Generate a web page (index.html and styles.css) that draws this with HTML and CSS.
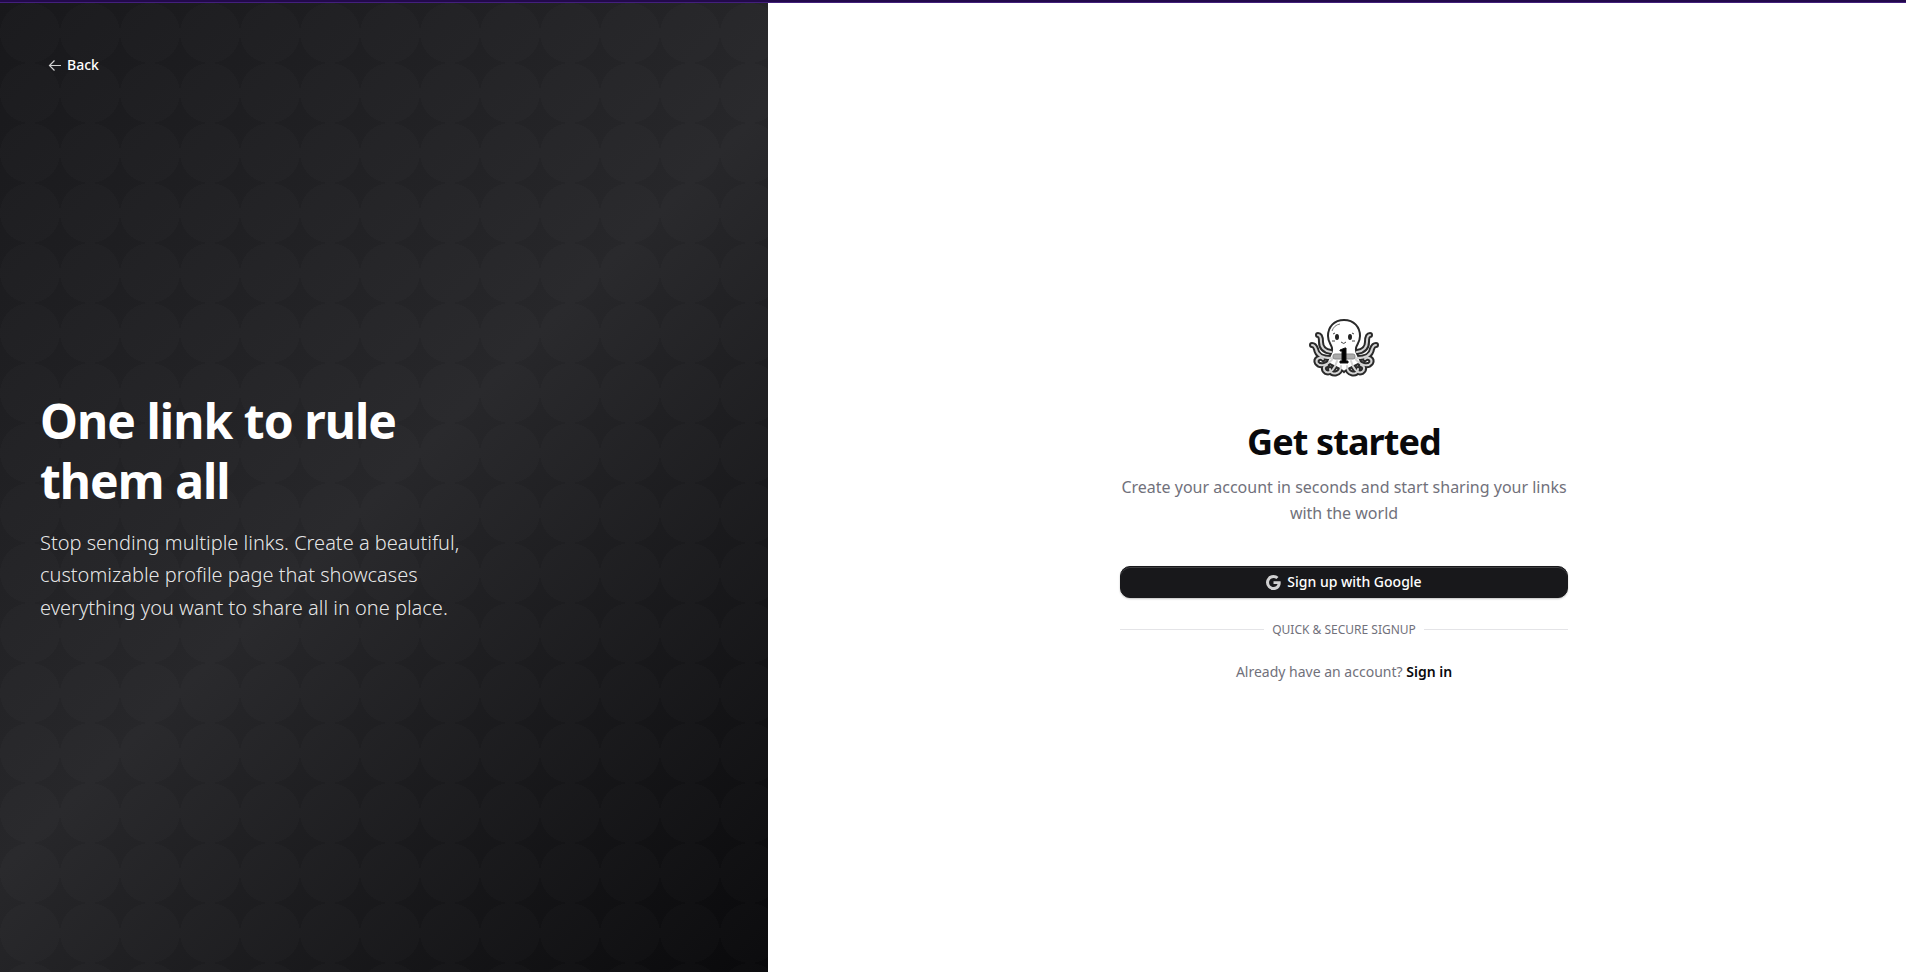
FILE: index.html
```html
<!DOCTYPE html>
<html lang="en">
<head>
<meta charset="utf-8">
<title>Get started</title>
<link rel="stylesheet" href="styles.css">
</head>
<body>
<div class="accent-bar"></div>
<div class="layout">
  <aside class="promo">
    <a class="back" href="#">
      <svg class="back-icon" viewBox="0 0 15 15" aria-hidden="true"><path d="M13 7.500H2M6.500 2.500L1.500 7.500l5 5" fill="none" stroke="currentColor" stroke-width="1.200"/></svg>
      Back
    </a>
    <div class="promo-copy">
      <h2 class="promo-title">One link to rule them all</h2>
      <p class="promo-text">Stop sending multiple links. Create a beautiful, customizable profile page that showcases everything you want to share all in one place.</p>
    </div>
  </aside>
  <main class="signup">
    <div class="card">
      <svg class="logo" viewBox="0 0 96 96" role="img" aria-label="Octopus logo">
        <g id="arms" fill="none" stroke-linecap="round" stroke-linejoin="round">
          <g stroke="#2a2a2a" stroke-width="6">
            <path id="a1" d="M35 52C28 51 25 47 25 42C25 37 24 35 22 35"/>
            <path id="a2" d="M35 58C25 58 21 55 20 49C19 46 18 45 16 45"/>
            <path id="a3" d="M38 57C32 66 24 67 21 63C19 59 24 56 27 59"/>
            <path id="a4" d="M41 61C39 68 35 74 30 72C27 70 27 66 31 65"/>
            <path id="a5" d="M45 66C45 75 34 76 34 69"/>
          </g>
        </g>
        <use href="#arms" transform="translate(96 0) scale(-1 1)"/>
        <path d="M48 20C38 20 32 27 32 36C32 42 35 44 36 48C37 54 32 57 31 62C36 67 42 66 48 72C54 66 60 67 65 62C64 57 59 54 60 48C61 44 64 42 64 36C64 27 58 20 48 20Z" fill="#fff" stroke="#2a2a2a" stroke-width="2"/>
        <g id="inner" fill="none" stroke="#d4d4d4" stroke-width="2" stroke-linecap="round">
          <path d="M35 52C28 51 25 47 25 42C25 37 24 35 22 35"/>
          <path d="M35 58C25 58 21 55 20 49C19 46 18 45 16 45"/>
          <path d="M38 57C32 66 24 67 21 63C19 59 24 56 27 59"/>
          <path d="M41 61C39 68 35 74 30 72C27 70 27 66 31 65"/>
          <path d="M45 66C45 75 34 76 34 69"/>
        </g>
        <use href="#inner" transform="translate(96 0) scale(-1 1)"/>
        <path d="M36 31Q38 25 44 24" fill="none" stroke="#777" stroke-width="1"/>
        <ellipse cx="41" cy="37" rx="2" ry="3" fill="#222"/><ellipse cx="54" cy="37" rx="2" ry="3" fill="#222"/>
        <path d="M37 34L39 33M58 34L56 33M36 41H39M56 41H59M45 42Q48 45 50 42" fill="none" stroke="#444" stroke-width="1"/>
        <rect x="37" y="54" width="22" height="5" rx="2" fill="#aaa" stroke="#888"/>
        <path d="M44 50L49 48H50V61H52V63H44V61H46V51H44Z" fill="#000" stroke="#111"/>
      </svg>
      <h1 class="title">Get started</h1>
      <p class="subtitle">Create your account in seconds and start sharing your links with the world</p>
      <button class="google" type="button">
        <svg class="google-icon" viewBox="2 2 20 20" aria-hidden="true"><path fill="currentColor" d="M3.064 7.510A9.996 9.996 0 0 1 12 2c2.695 0 4.959.991 6.690 2.605l-2.867 2.868C14.786 6.482 13.468 5.977 12 5.977c-2.605 0-4.810 1.760-5.595 4.123-.2.6-.314 1.240-.314 1.900 0 .66.114 1.300.314 1.900.786 2.364 2.990 4.123 5.595 4.123 1.345 0 2.490-.355 3.386-.955a4.600 4.600 0 0 0 1.996-3.018H12v-3.868h9.418c.118.654.182 1.336.182 2.045 0 3.046-1.090 5.610-2.982 7.350C16.964 21.105 14.700 22 12 22A9.996 9.996 0 0 1 2 12c0-1.614.386-3.140 1.064-4.490z"/></svg>
        Sign up with Google
      </button>
      <div class="divider"><span>Quick &amp; secure signup</span></div>
      <p class="signin">Already have an account? <a href="#">Sign in</a></p>
    </div>
  </main>
</div>
</body>
</html>
```
FILE: styles.css
```css
*, *::before, *::after { box-sizing: border-box; }
body {
  margin: 0;
  min-height: 100vh;
  display: flex;
  flex-direction: column;
  background: #fff;
  color: #09090b;
  font-family: "Noto Sans", sans-serif;
  font-size: 14px;
  line-height: 20px;
}
h1, h2, p { margin: 0; }
a { color: inherit; text-decoration: none; }
.accent-bar { height: 3px; background: #22094b; border-bottom: 1px solid #43207c; }
.layout { flex: 1; display: flex; }

.promo {
  flex: 0 1 768px;
  display: flex;
  flex-direction: column;
  align-items: flex-start;
  padding: 46px 40px 38px;
  color: #fff;
  background:
    radial-gradient(circle at center, rgba(255, 255, 255, 0.01) 30px, transparent 30px) 0 0 / 60px 60px,
    linear-gradient(135deg, #18181b, #27272a 50%, #09090b);
}
.back {
  display: flex;
  align-items: center;
  gap: 4px;
  height: 32px;
  padding: 0 8px;
  font-weight: 500;
}
.back-icon { width: 15px; height: 15px; opacity: 0.8; }
.promo-copy { flex: 1; display: flex; flex-direction: column; justify-content: center; gap: 16px; max-width: 448px; }
.promo-title { font-size: 48px; line-height: 60px; font-weight: 700; letter-spacing: -0.02em; }
.promo-text { font-size: 20px; line-height: 1.625; font-weight: 300; color: rgba(255, 255, 255, 0.9); }

.signup { flex: 1; display: flex; align-items: center; justify-content: center; padding: 39px 32px 32px 46px; }
.card { width: 100%; max-width: 448px; display: flex; flex-direction: column; text-align: center; }
.logo { width: 96px; height: 96px; align-self: center; margin-bottom: 26px; }
.title { font-size: 36px; line-height: 40px; font-weight: 700; letter-spacing: -0.025em; margin-bottom: 12px; }
.subtitle { font-size: 16px; line-height: 26px; color: #71717b; margin-bottom: 40px; }
.google {
  display: flex;
  align-items: center;
  justify-content: center;
  gap: 6px;
  height: 32px;
  border: 1px solid #18181b;
  border-radius: 10px;
  background: #18181b;
  color: #fff;
  font: inherit;
  font-weight: 500;
  box-shadow: inset 0 1px rgba(255, 255, 255, 0.16), 0 1px 2px rgba(0, 0, 0, 0.24);
}
.google-icon { width: 15px; height: 15px; opacity: 0.8; }
.divider {
  display: flex;
  align-items: center;
  gap: 8px;
  margin: 24px 0;
  font-size: 12px;
  line-height: 16px;
  text-transform: uppercase;
  color: #71717b;
}
.divider::before, .divider::after { content: ""; flex: 1; height: 2px; border-top: 1px solid #e4e4e7; }
.signin { color: #71717b; }
.signin a { color: #09090b; font-weight: 600; }
```
